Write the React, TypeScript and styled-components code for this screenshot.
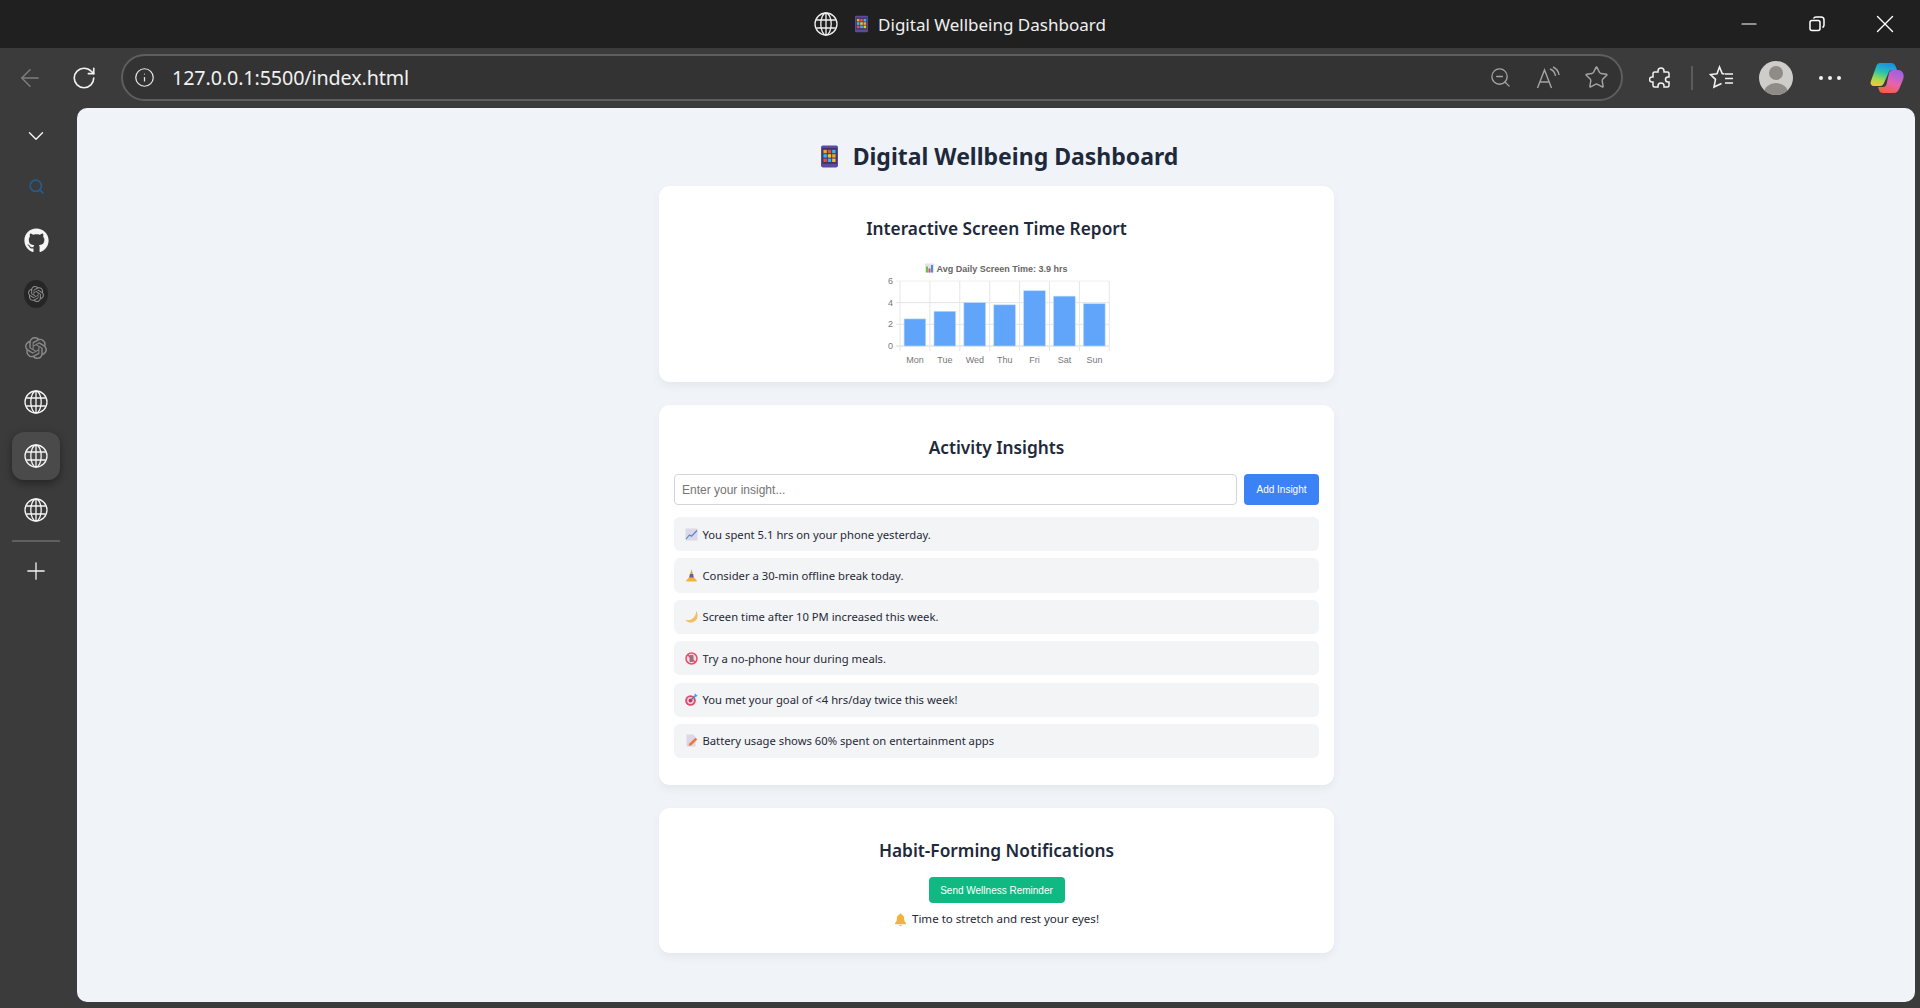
import { createGlobalStyle, styled } from 'styled-components'
import { ArrowLeft, ChevronDown, Info, Minus, Plus, RotateCw, Search, Star, X, ZoomOut } from 'lucide-react'
import { FaGithub } from 'react-icons/fa'
import { SiOpenai } from 'react-icons/si'

const GlobalStyle = createGlobalStyle`
  html, body {
    margin: 0;
    height: 100%;
    overflow: hidden;
    background: #3b3b3b;
    font-family: "Noto Sans", "Open Sans", sans-serif;
  }
`

const Shell = styled.div`
  display: flex;
  flex-direction: column;
  height: 1008px;
`

const TitleBar = styled.header`
  display: grid;
  grid-template-columns: 1fr auto 1fr;
  align-items: center;
  height: 48px;
  flex: none;
  background: #202020;
  color: #f0f0f0;
`

const TitleGroup = styled.div`
  grid-column: 2;
  display: flex;
  align-items: center;
  font-size: 17px;
  line-height: 24px;
`

const TitleIcon = styled.div`
  display: flex;
  margin-right: 17px;
`

const TitleText = styled.span`
  margin: 2px 0 0 10px;
`

const WindowControls = styled.div`
  grid-column: 3;
  justify-self: end;
  display: flex;
  padding-right: 1px;
`

const WindowButton = styled.div`
  width: 68px;
  height: 48px;
  display: flex;
  align-items: center;
  justify-content: center;
  color: #fff;
`

const Toolbar = styled.div`
  display: flex;
  align-items: center;
  height: 60px;
  flex: none;
  padding: 0 5px 0 10px;
  background: #3b3b3b;
  gap: 8px;
`

const ToolButton = styled.div<{ $w?: number; $dim?: boolean; $left?: number }>`
  width: ${p => p.$w ?? 42}px;
  height: 44px;
  flex: none;
  margin-left: ${p => p.$left ?? 0}px;
  display: flex;
  align-items: center;
  justify-content: center;
  color: ${p => (p.$dim ? '#7f7f7f' : '#f2f2f2')};
`

const AddressBar = styled.div`
  flex: 1;
  height: 47px;
  box-sizing: border-box;
  margin: -1px 8px 0 9px;
  display: flex;
  align-items: center;
  padding: 0 1px 0 11px;
  border: 2px solid #5e5e5e;
  border-radius: 24px;
  background: #333333;
  color: #e8e8e8;
`

const UrlText = styled.span`
  flex: 1;
  margin-left: 17px;
  font-size: 19.7px;
  letter-spacing: -0.1px;
  color: #f1f1f1;
`

const AddressAction = styled.div`
  width: 48px;
  display: flex;
  justify-content: center;
  color: #a4a4a4;
`

const ToolDivider = styled.div`
  width: 2px;
  height: 24px;
  flex: none;
  background: #5c5c5c;
`

const Avatar = styled.div`
  position: relative;
  width: 34px;
  height: 34px;
  border-radius: 50%;
  overflow: hidden;
  background: #cfcdc9;
`

const AvatarHead = styled.div`
  position: absolute;
  left: 10px;
  top: 5px;
  width: 14px;
  height: 14px;
  border-radius: 50%;
  background: #8f8b87;
`

const AvatarBody = styled.div`
  position: absolute;
  left: 5px;
  top: 22px;
  width: 24px;
  height: 20px;
  border-radius: 50%;
  background: #8f8b87;
`

const Dots = styled.div`
  display: flex;
  gap: 5px;
`

const Dot = styled.div`
  width: 4px;
  height: 4px;
  border-radius: 50%;
  background: #f2f2f2;
`

const Body = styled.div`
  flex: 1;
  display: flex;
  min-height: 0;
`

const Sidebar = styled.nav`
  width: 72px;
  flex: none;
  margin-right: 5px;
  box-sizing: border-box;
  padding: 8px 12px 0;
  display: flex;
  flex-direction: column;
  align-items: stretch;
  gap: 6px;
`

const SideItem = styled.div<{ $active?: boolean; $h?: number; $color?: string }>`
  height: ${p => p.$h ?? 48}px;
  width: 48px;
  flex: none;
  display: flex;
  align-items: center;
  justify-content: center;
  border-radius: 12px;
  color: ${p => p.$color ?? '#f5f5f5'};
  background: ${p => (p.$active ? '#4a4a4a' : 'transparent')};
  box-shadow: ${p => (p.$active ? '0 3px 8px rgba(0,0,0,.4)' : 'none')};
`

const SideDot = styled.div`
  width: 24px;
  height: 28px;
  border-radius: 50%;
  background: #262626;
  display: flex;
  align-items: center;
  justify-content: center;
  color: #8c8c8c;
`

const SideDivider = styled.div`
  height: 2px;
  flex: none;
  width: 48px;
  background: #5f5f5f;
`

const Main = styled.main`
  flex: 1;
  margin: 0 5px 6px 0;
  padding-top: 32px;
  border-radius: 10px;
  background: #f0f4f8;
  display: flex;
  flex-direction: column;
  align-items: center;
  overflow: hidden;
`

const PageTitle = styled.h1`
  display: flex;
  align-items: center;
  gap: 15px;
  margin: 0 0 14px 7px;
  font-size: 23px;
  line-height: 32px;
  font-weight: 700;
  color: #1e293b;
`

const Card = styled.section<{ $bottom: number }>`
  width: 675px;
  box-sizing: border-box;
  margin-bottom: 23px;
  padding: 29px 14.5px ${p => p.$bottom}px 15.5px;
  border-radius: 11px;
  background: #fff;
  box-shadow: 0 4px 10px rgba(0, 0, 0, 0.05);
  display: flex;
  flex-direction: column;
`

const CardTitle = styled.h2`
  margin: 0 0 12px;
  text-align: center;
  font-size: 17.3px;
  line-height: 28px;
  font-weight: 600;
  color: #1e293b;
`

const ChartWrap = styled.div`
  display: flex;
  justify-content: center;
  margin: 6px 0 0 3px;
`

const InsightForm = styled.div`
  display: flex;
  gap: 7px;
  margin-bottom: 12px;
`

const InsightInput = styled.input`
  flex: 1;
  min-width: 0;
  height: 31px;
  box-sizing: border-box;
  padding: 0 7px;
  border: 1.5px solid #d1d5db;
  border-radius: 4px;
  background: #fff;
  font: 12px "Liberation Sans", Arial, sans-serif;
  color: #1f2937;

  &::placeholder {
    color: #757575;
    opacity: 1;
  }
`

const ActionButton = styled.button<{ $color: string; $w: number; $h: number }>`
  width: ${p => p.$w}px;
  height: ${p => p.$h}px;
  flex: none;
  padding: 0;
  border: 0;
  border-radius: 4px;
  background: ${p => p.$color};
  color: #fff;
  font: 10px "Liberation Sans", Arial, sans-serif;
`

const InsightList = styled.ul`
  list-style: none;
  margin: 0;
  padding: 0;
  display: flex;
  flex-direction: column;
  gap: 7.2px;
`

const InsightRow = styled.li`
  height: 34.2px;
  display: flex;
  align-items: center;
  gap: 5px;
  padding-left: 10.5px;
  border-radius: 6px;
  background: #f3f4f6;
  font-size: 11.25px;
  color: #1f2937;
`

const CenterStack = styled.div`
  display: flex;
  flex-direction: column;
  align-items: center;
`

const Notice = styled.p`
  display: flex;
  align-items: center;
  gap: 5px;
  margin: 7px 0 0;
  font-size: 11.55px;
  line-height: 18px;
  color: #1f2937;
`

function Globe({ size = 24 }: { size?: number }) {
  return (
    <svg width={size} height={size} viewBox="0 0 24 24" fill="none" stroke="currentColor" strokeWidth="1.3">
      <circle cx="12" cy="12" r="11" />
      <ellipse cx="12" cy="12" rx="5.2" ry="11" />
      <path d="M12 1v22M2.2 8h19.6M2.2 16h19.6" />
    </svg>
  )
}

function Abacus({ w, h }: { w: number; h: number }) {
  const colors = ['#f5a623', '#e8503a', '#35b6f2', '#35b6f2', '#f5c518', '#f5a623', '#e8503a', '#35b6f2', '#f5c518']
  return (
    <svg width={w} height={h} viewBox="0 0 14 18">
      <rect width="14" height="18" rx="1.5" fill="#5c4a9c" />
      <rect x="1" y="2" width="12" height="13" fill="#3f3566" />
      {colors.map((c, i) => (
        <rect key={i} x={2 + (i % 3) * 3.6} y={3.5 + Math.floor(i / 3) * 3.6} width="2.8" height="2.8" fill={c} />
      ))}
    </svg>
  )
}

function BarGlyph() {
  return (
    <>
      <rect width="9" height="9" fill="#e4e4e8" />
      <rect x="1" y="3" width="2" height="6" fill="#6cc04a" />
      <rect x="3.5" y="5" width="2" height="4" fill="#e0457b" />
      <rect x="6" y="1.5" width="2" height="7.5" fill="#4a90d9" />
    </>
  )
}

type EmojiKind = 'trend' | 'meditate' | 'moon' | 'nophone' | 'target' | 'memo' | 'bell'

function Emoji({ kind }: { kind: EmojiKind }) {
  return (
    <svg width="13" height="13" viewBox="0 0 13 13" style={{ flex: 'none' }}>
      {kind === 'trend' && (
        <>
          <rect x="0.5" y="0.5" width="12" height="12" fill="#dcd8ea" />
          <path d="M1 11 4.500 7l2 1.200L12 2.500" fill="none" stroke="#4a86d0" strokeWidth="1.1" />
        </>
      )}
      {kind === 'meditate' && (
        <>
          <path d="M5.500 3.500 6.500.5l1 3 1 5.500h-4z" fill="#e3a235" />
          <path d="M4.800 5h3.400l.6 4H4.200z" fill="#6a5aa8" />
          <path d="M.8 12 3.800 8.500h5.400l3 3.500c0 .7-11.400.7-11.400 0z" fill="#f2b33d" />
        </>
      )}
      {kind === 'moon' && (
        <path d="M11 .8C12.800 3 13 6 12 8.500 10.800 11.300 8 12.800 5 12.600 3 12.400 1.400 11.300.5 9.800c3 .8 6 .2 8-2C10.700 5.500 11.400 3 11 .8z" fill="#f4bd62" />
      )}
      {kind === 'nophone' && (
        <>
          <circle cx="6.500" cy="6.500" r="5.500" fill="#f3dfe4" />
          <rect x="4.500" y="3" width="4" height="7" rx="0.7" fill="#7a7f8c" />
          <circle cx="6.500" cy="6.500" r="5.500" fill="none" stroke="#ef4a68" strokeWidth="1.500" />
          <path d="M2.800 2.800l7.400 7.400" stroke="#ef4a68" strokeWidth="1.300" />
        </>
      )}
      {kind === 'target' && (
        <>
          <circle cx="5.500" cy="7.500" r="5.300" fill="#e2476f" />
          <circle cx="5.500" cy="7.500" r="3.400" fill="#f3d5de" />
          <circle cx="5.500" cy="7.500" r="1.900" fill="#c9345c" />
          <path d="M6 7l4.500-4.500" stroke="#3f7fb8" strokeWidth="1.200" />
          <path d="M9.500 1.500 11 .5 11.300 2 12.800 2.200 11 4H9.200z" fill="#45a6ea" />
        </>
      )}
      {kind === 'memo' && (
        <>
          <path d="M1.500 0.500h6.500l2.500 2.500v9.500h-9z" fill="#dcd7e4" />
          <path d="M3.500 11.800 4.300 9.500 10.500 3.800 12.300 5.500 6 11.500z" fill="#f0743e" />
        </>
      )}
      {kind === 'bell' && (
        <path d="M6.500.5c.8 0 1 .5 1 1 2 .6 2.600 2.200 2.600 4.200 0 2 .8 3.200 1.900 4.600v1H1v-1c1.100-1.400 1.900-2.600 1.900-4.600 0-2 .6-3.600 2.600-4.200 0-.5.2-1 1-1zM5 12h3a1.500 1 0 0 1-3 0z" fill="#f5b13d" />
      )}
    </svg>
  )
}

function Copilot() {
  return (
    <svg width="34" height="32" viewBox="0 0 34 32">
      <defs>
        <linearGradient id="cpA" x1="0.6" y1="0" x2="0.3" y2="1">
          <stop offset="0" stopColor="#1a8fe6" />
          <stop offset="0.4" stopColor="#27c3b0" />
          <stop offset="0.75" stopColor="#a7d94a" />
          <stop offset="1" stopColor="#f0c93a" />
        </linearGradient>
        <linearGradient id="cpB" x1="0.7" y1="0" x2="0.3" y2="1">
          <stop offset="0" stopColor="#9a62e6" />
          <stop offset="0.55" stopColor="#e663b0" />
          <stop offset="1" stopColor="#f4603a" />
        </linearGradient>
      </defs>
      <path d="M10 1h11c2.500 0 4 1.500 5 4l1 3h-5c-2 0-3 1-3.600 3L14 21c-.7 2-2 3-4 3H4c-2.500 0-4-2-3.200-4.500L6 5c.8-2.500 2-4 4-4z" fill="url(#cpA)" />
      <path d="M23 8h5c3 0 5 2 5.500 4.500.5 2.500 0 4-1 6.500l-3 7c-1 3-3 5-6 5H13c-2 0-3.500-1-4-3l-1-3h5c2 0 3-1 3.600-3L19 11c.5-2 2-3 4-3z" fill="url(#cpB)" />
    </svg>
  )
}

const hours = [
  { day: 'Mon', value: 2.5 },
  { day: 'Tue', value: 3.2 },
  { day: 'Wed', value: 4 },
  { day: 'Thu', value: 3.8 },
  { day: 'Fri', value: 5.1 },
  { day: 'Sat', value: 4.6 },
  { day: 'Sun', value: 3.9 },
]

// chart drawn in screen px: plot area 209 x 65, same scale as the reference canvas
function ScreenTimeChart() {
  const left = 22
  const top = 20
  const plotH = 65
  const step = 29.9
  const barW = 21.6
  const y = (v: number) => top + plotH - (v / 6) * plotH
  return (
    <svg width="240" height="109" viewBox="0 0 240 109" fontFamily='"Liberation Sans", Arial, sans-serif'>
      {[0, 2, 4, 6].map(t => (
        <g key={t}>
          <line x1={left - 4} x2={left + 209} y1={y(t)} y2={y(t)} stroke={t === 0 ? '#d6d6d6' : t === 6 ? '#f0f0f0' : '#e4e4e4'} />
          <text x={left - 7} y={y(t) + 3} textAnchor="end" fontSize="9" fill="#777">
            {t}
          </text>
        </g>
      ))}
      {Array.from({ length: 8 }, (_, i) => (
        <line key={i} x1={left + i * step} x2={left + i * step} y1={top} y2={top + plotH + 5} stroke="#e6e6e6" />
      ))}
      {hours.map((h, i) => (
        <g key={h.day}>
          <rect
            x={left + 4.1 + i * step}
            y={y(h.value)}
            width={barW}
            height={(h.value / 6) * plotH}
            fill="#60a5fa"
            stroke="#bcd8fb"
            strokeWidth="0.6"
          />
          <text x={left + 15 + i * step} y={top + plotH + 17} textAnchor="middle" fontSize="9" fill="#777">
            {h.day}
          </text>
        </g>
      ))}
      <text x="124" y="10.5" textAnchor="middle" fontSize="9" fontWeight="700" fill="#666">
        Avg Daily Screen Time: 3.9 hrs
      </text>
      <g transform="translate(47 2.5)">
        <BarGlyph />
      </g>
    </svg>
  )
}

const insights: { kind: EmojiKind; text: string }[] = [
  { kind: 'trend', text: 'You spent 5.1 hrs on your phone yesterday.' },
  { kind: 'meditate', text: 'Consider a 30-min offline break today.' },
  { kind: 'moon', text: 'Screen time after 10 PM increased this week.' },
  { kind: 'nophone', text: 'Try a no-phone hour during meals.' },
  { kind: 'target', text: 'You met your goal of <4 hrs/day twice this week!' },
  { kind: 'memo', text: 'Battery usage shows 60% spent on entertainment apps' },
]

export default function App() {
  return (
    <Shell>
      <GlobalStyle />
      <TitleBar>
        <TitleGroup>
          <TitleIcon>
            <Globe />
          </TitleIcon>
          <Abacus w={13} h={18} />
          <TitleText>Digital Wellbeing Dashboard</TitleText>
        </TitleGroup>
        <WindowControls>
          <WindowButton>
            <Minus size={24} strokeWidth={1.2} />
          </WindowButton>
          <WindowButton>
            <svg width="16" height="16" viewBox="0 0 16 16" fill="none" stroke="currentColor" strokeWidth="1.5">
              <rect x="1" y="4.5" width="10" height="10" rx="2" />
              <path d="M4.5 2.500c.5-1 1-1.500 2.500-1.500h5c2 0 3 1 3 3v5c0 1.500-.5 2-1.500 2.500" />
            </svg>
          </WindowButton>
          <WindowButton>
            <X size={30} strokeWidth={1.1} />
          </WindowButton>
        </WindowControls>
      </TitleBar>

      <Toolbar>
        <ToolButton $w={40} $dim>
          <ArrowLeft size={28} strokeWidth={1.2} />
        </ToolButton>
        <ToolButton $w={40} $left={6}>
          <RotateCw size={26} strokeWidth={1.5} />
        </ToolButton>
        <AddressBar>
          <Info size={21} strokeWidth={1.4} />
          <UrlText>127.0.0.1:5500/index.html</UrlText>
          <AddressAction>
            <ZoomOut size={23} strokeWidth={1.4} />
          </AddressAction>
          <AddressAction>
            <svg width="24" height="24" viewBox="0 0 24 24" fill="none" stroke="currentColor" strokeWidth="1.4">
              <path d="M1.500 22 8.500 4l7 18M4 16h9M14 3c3 1 5 3.500 5.500 7M17 1c3.500 1.500 5.500 4.500 6 8" />
            </svg>
          </AddressAction>
          <AddressAction>
            <Star size={25} strokeWidth={1.4} />
          </AddressAction>
        </AddressBar>
        <ToolButton $w={44}>
          <svg width="24" height="24" viewBox="0 0 24 24" fill="none" stroke="currentColor" strokeWidth="1.5">
            <path d="M9 6V5a3 3 0 0 1 6 0v1h3.500A1.500 1.500 0 0 1 20 7.500V11h-1a2.500 2.500 0 0 0 0 5h1v3.500a1.500 1.500 0 0 1-1.500 1.500H15v-1a3 3 0 0 0-6 0v1H5.500A1.500 1.500 0 0 1 4 19.500V16H3a2.500 2.500 0 0 1 0-5h1V7.500A1.500 1.500 0 0 1 5.500 6z" />
          </svg>
        </ToolButton>
        <ToolDivider />
        <ToolButton>
          <svg width="26" height="26" viewBox="0 0 26 26" fill="none" stroke="currentColor" strokeWidth="1.6">
            <path d="M15.500 9 13.200 8.500 10.500 2 8 8.700 1.500 9.500l5 4.800L5 22l7.500-3.500" />
            <path d="M16 9h8M16 13.500h8M16 18h8" />
          </svg>
        </ToolButton>
        <ToolButton $w={50}>
          <Avatar>
            <AvatarHead />
            <AvatarBody />
          </Avatar>
        </ToolButton>
        <ToolButton>
          <Dots>
            <Dot />
            <Dot />
            <Dot />
          </Dots>
        </ToolButton>
        <ToolButton $w={56}>
          <Copilot />
        </ToolButton>
      </Toolbar>

      <Body>
        <Sidebar>
          <SideItem $h={40}>
            <ChevronDown size={26} strokeWidth={1.3} />
          </SideItem>
          <SideItem $color="#245c8c">
            <Search size={17} strokeWidth={2.4} />
          </SideItem>
          <SideItem>
            <FaGithub size={25} />
          </SideItem>
          <SideItem>
            <SideDot>
              <SiOpenai size={16} />
            </SideDot>
          </SideItem>
          <SideItem $color="#8a8a8a">
            <SiOpenai size={22} />
          </SideItem>
          <SideItem>
            <Globe />
          </SideItem>
          <SideItem $active>
            <Globe />
          </SideItem>
          <SideItem>
            <Globe />
          </SideItem>
          <SideDivider />
          <SideItem $h={46}>
            <Plus size={28} strokeWidth={1.1} />
          </SideItem>
        </Sidebar>

        <Main>
          <PageTitle>
            <Abacus w={17} h={23} />
            Digital Wellbeing Dashboard
          </PageTitle>

          <Card $bottom={12}>
            <CardTitle>Interactive Screen Time Report</CardTitle>
            <ChartWrap>
              <ScreenTimeChart />
            </ChartWrap>
          </Card>

          <Card $bottom={27}>
            <CardTitle>Activity Insights</CardTitle>
            <InsightForm>
              <InsightInput placeholder="Enter your insight..." />
              <ActionButton $color="#3b82f6" $w={75} $h={31}>
                Add Insight
              </ActionButton>
            </InsightForm>
            <InsightList>
              {insights.map(item => (
                <InsightRow key={item.kind}>
                  <Emoji kind={item.kind} />
                  {item.text}
                </InsightRow>
              ))}
            </InsightList>
          </Card>

          <Card $bottom={25}>
            <CardTitle>Habit-Forming Notifications</CardTitle>
            <CenterStack>
              <ActionButton $color="#10b981" $w={136} $h={26}>
                Send Wellness Reminder
              </ActionButton>
              <Notice>
                <Emoji kind="bell" />
                Time to stretch and rest your eyes!
              </Notice>
            </CenterStack>
          </Card>
        </Main>
      </Body>
    </Shell>
  )
}
